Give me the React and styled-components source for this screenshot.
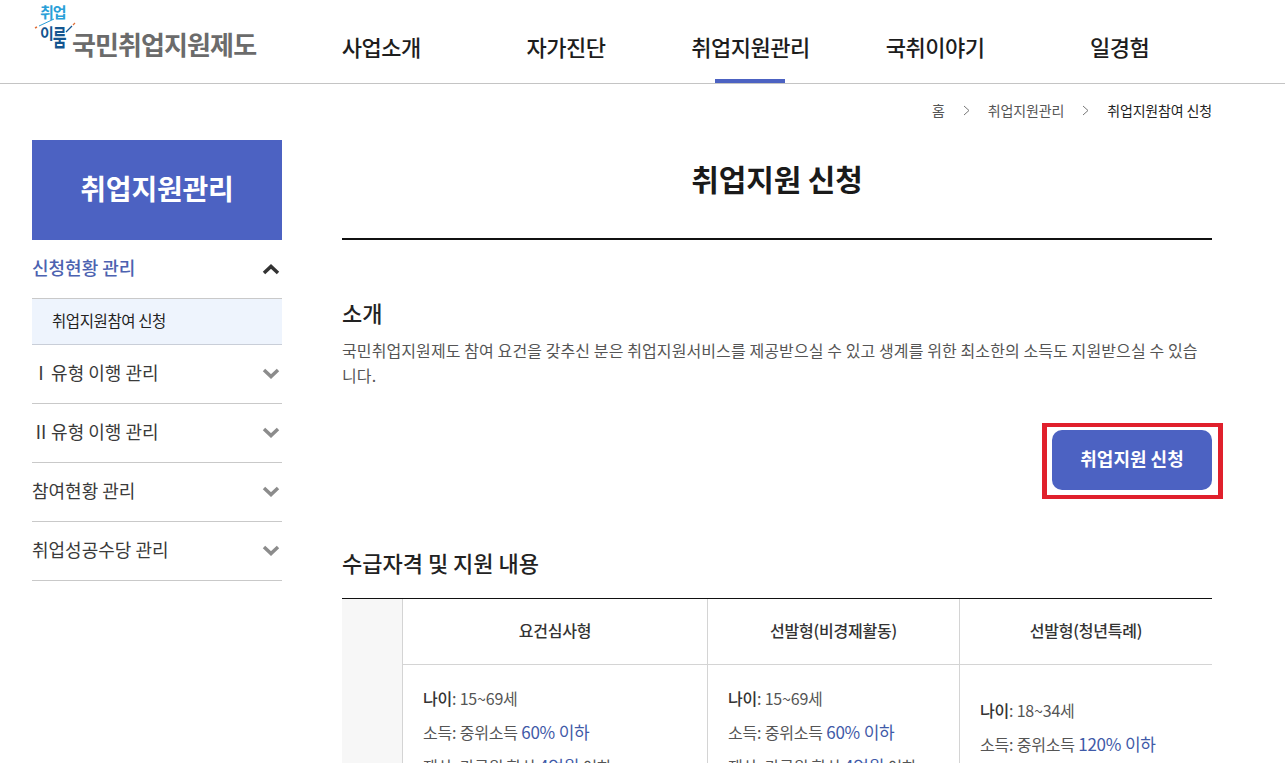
import React from 'react';
import styled, { createGlobalStyle } from 'styled-components';

const GlobalStyle = createGlobalStyle`
  html, body {
    margin: 0;
    padding: 0;
    height: 763px;
    overflow: hidden;
    background: #fff;
    font-family: "Noto Sans CJK KR", "Noto Sans", sans-serif;
    color: #222;
  }
  * { box-sizing: border-box; }
`;

const Header = styled.header`
  display: flex;
  height: 84px;
  border-bottom: 1px solid #c4c4c4;
`;

const Logo = styled.a`
  width: 289px;
  padding-left: 36px;
  display: flex;
  align-items: flex-start;
  flex-shrink: 0;
`;

const LogoMark = styled.div`
  position: relative;
  width: 36px;
  height: 52px;
  padding: 4px 0 0 4px;
  flex-shrink: 0;
  font-size: 15px;
  line-height: 16px;
  font-weight: 700;
  letter-spacing: -1px;
`;

const LogoTop = styled.div`
  color: #2a9fd8;
`;

const LogoBottom = styled.div`
  color: #14558f;
  margin-top: 5px;
`;

const LogoTall = styled.span`
  display: inline-block;
  transform: scaleY(1.5);
  transform-origin: top;
`;

const LogoStroke = styled.svg`
  position: absolute;
  left: 0;
  top: 0;
  overflow: visible;
`;

const LogoName = styled.div`
  margin-top: 28px;
  font-size: 26px;
  line-height: 32px;
  font-weight: 700;
  letter-spacing: -0.9px;
  color: #6b6b6b;
  white-space: nowrap;
`;

const Gnb = styled.nav`
  display: flex;
`;

const GnbItem = styled.a`
  position: relative;
  width: 184.6px;
  height: 83px;
  display: flex;
  justify-content: center;
  padding-top: 30px;
  font-size: 22px;
  line-height: 32px;
  font-weight: 500;
  letter-spacing: -0.5px;
  color: #1d1d1d;
  &::after {
    content: '';
    display: ${(p) => (p.$active ? 'block' : 'none')};
    position: absolute;
    left: 50%;
    bottom: 0;
    width: 70px;
    height: 4px;
    margin-left: -35px;
    background: #4c62c2;
  }
`;

const Body = styled.div`
  display: flex;
  padding: 0 73px 0 32px;
`;

const Side = styled.aside`
  width: 250px;
  margin-top: 56px;
  flex-shrink: 0;
`;

const SideTitle = styled.div`
  height: 100px;
  padding-bottom: 4px;
  display: flex;
  align-items: center;
  justify-content: center;
  background: #4c62c2;
  color: #fff;
  font-size: 28px;
  font-weight: 700;
  letter-spacing: -0.2px;
`;

const SideItem = styled.div`
  height: 59px;
  padding-bottom: 4px;
  display: flex;
  align-items: center;
  justify-content: space-between;
  border-bottom: 1px solid #c9c9c9;
  font-size: 18px;
  font-weight: ${(p) => (p.$open ? 500 : 400)};
  color: ${(p) => (p.$open ? '#4c62b0' : '#3a3a3a')};
`;

const SideSub = styled.div`
  height: 46px;
  padding: 0 0 3px 20px;
  display: flex;
  align-items: center;
  background: #eef4fd;
  border-bottom: 1px solid #c9ced8;
  font-size: 15.5px;
  letter-spacing: -0.4px;
  color: #222;
`;

const Chevron = styled.svg`
  margin: 4px 2px 0 0;
  color: ${(p) => (p.$open ? '#333' : '#8c8c8c')};
`;

const Main = styled.main`
  margin-left: 60px;
  flex: 1;
  min-width: 0;
`;

const Crumbs = styled.div`
  height: 56px;
  padding-bottom: 4px;
  display: flex;
  justify-content: flex-end;
  align-items: center;
  font-size: 14px;
  letter-spacing: -0.15px;
  color: #555;
`;

const CrumbSep = styled.svg`
  margin: 0 18px;
  color: #777;
`;

const CrumbCurrent = styled.span`
  color: #222;
`;

const PageTitle = styled.h1`
  margin: 0;
  height: 100px;
  padding-top: 14px;
  border-bottom: 2px solid #111;
  text-align: center;
  font-size: 30px;
  line-height: 48px;
  font-weight: 700;
  letter-spacing: -0.1px;
  color: #1a1a1a;
`;

const SectionTitle = styled.h2`
  margin: ${(p) => p.$top}px 0 0;
  font-size: 22px;
  line-height: 32px;
  font-weight: 500;
  color: #222;
`;

const Intro = styled.p`
  margin: 10px 0 0;
  font-size: 16px;
  line-height: 25px;
  color: #555;
  letter-spacing: 0.1px;
  word-break: break-all;
`;

const ButtonRow = styled.div`
  display: flex;
  justify-content: flex-end;
  margin-top: 42px;
`;

const ApplyButton = styled.button`
  position: relative;
  width: 160px;
  height: 60px;
  padding: 0 0 5px;
  border: 0;
  border-radius: 10px;
  background: #4c62c2;
  color: #fff;
  font-family: inherit;
  font-size: 18px;
  font-weight: 700;
  &::before {
    content: '';
    position: absolute;
    top: -7px;
    right: -11px;
    bottom: -9px;
    left: -10px;
    border: solid #e0202c;
    border-width: 4px 5px;
  }
`;

const Table = styled.div`
  margin-top: 20px;
  border-top: 1px solid #111;
  display: grid;
  grid-template-columns: 60px 305px 252px 1fr;
  grid-template-rows: 66px auto;
`;

const Corner = styled.div`
  grid-row: span 2;
  height: 300px;
  background: #f7f7f7;
`;

const HeadCell = styled.div`
  padding-bottom: 3px;
  display: flex;
  align-items: center;
  justify-content: center;
  border-left: 1px solid #d4d4d4;
  border-bottom: 1px solid #d4d4d4;
  font-size: 16px;
  font-weight: 500;
  letter-spacing: -0.2px;
  color: #333;
`;

const Cell = styled.div`
  border-left: 1px solid #d4d4d4;
  padding: ${(p) => p.$top}px 0 0 20px;
  font-size: 16px;
  line-height: 34px;
  letter-spacing: -0.2px;
  color: #555;
`;

const Strong = styled.b`
  font-weight: 500;
  color: #333;
`;

const Blue = styled.span`
  color: #3f5aa8;
  font-size: 17px;
`;

function ChevronIcon({ open }) {
  return (
    <Chevron $open={open} width="18" height="12" viewBox="0 0 18 12" fill="none">
      <path
        d={open ? 'M2 10 9 3.5l7 6.5' : 'M2 2 9 8.5 16 2'}
        stroke="currentColor"
        strokeWidth="3.5"
      />
    </Chevron>
  );
}

function Sep() {
  return (
    <CrumbSep width="7" height="11" viewBox="0 0 7 11" fill="none">
      <path d="M1 1l5 4.5L1 10" stroke="currentColor" />
    </CrumbSep>
  );
}

const menus = [
  { label: '사업소개' },
  { label: '자가진단' },
  { label: '취업지원관리', active: true },
  { label: '국취이야기' },
  { label: '일경험' },
];

const sideMenus = ['Ⅰ\u200A유형 이행 관리', 'Ⅱ\u200A유형 이행 관리', '참여현황 관리', '취업성공수당 관리'];

export default function App() {
  return (
    <>
      <GlobalStyle />
      <Header>
        <Logo>
          <LogoMark>
            <LogoTop>취업</LogoTop>
            <LogoBottom>이<LogoTall>룸</LogoTall></LogoBottom>
            <LogoStroke width="36" height="40" viewBox="0 0 36 40" fill="none">
              <path d="M-1 28 1 27" stroke="#e0703a" strokeWidth="1.5" />
              <path d="M3 26 18 19" stroke="#2a9fd8" strokeWidth="1" />
              <path d="M30 32 36 26" stroke="#14558f" strokeWidth="1.2" />
              <path d="M37 25 39 23" stroke="#e0703a" strokeWidth="1.2" />
            </LogoStroke>
          </LogoMark>
          <LogoName>국민취업지원제도</LogoName>
        </Logo>
        <Gnb>
          {menus.map((m) => (
            <GnbItem key={m.label} $active={m.active}>{m.label}</GnbItem>
          ))}
        </Gnb>
      </Header>
      <Body>
        <Side>
          <SideTitle>취업지원관리</SideTitle>
          <SideItem $open>
            신청현황 관리
            <ChevronIcon open />
          </SideItem>
          <SideSub>취업지원참여 신청</SideSub>
          {sideMenus.map((label) => (
            <SideItem key={label}>
              {label}
              <ChevronIcon />
            </SideItem>
          ))}
        </Side>
        <Main>
          <Crumbs>
            홈<Sep />취업지원관리<Sep /><CrumbCurrent>취업지원참여 신청</CrumbCurrent>
          </Crumbs>
          <PageTitle>취업지원 신청</PageTitle>
          <SectionTitle $top={56}>소개</SectionTitle>
          <Intro>
            국민취업지원제도 참여 요건을 갖추신 분은 취업지원서비스를 제공받으실 수 있고 생계를 위한 최소한의 소득도 지원받으실 수 있습니다.
          </Intro>
          <ButtonRow>
            <ApplyButton>취업지원 신청</ApplyButton>
          </ButtonRow>
          <SectionTitle $top={56}>수급자격 및 지원 내용</SectionTitle>
          <Table>
            <Corner />
            <HeadCell>요건심사형</HeadCell>
            <HeadCell>선발형(비경제활동)</HeadCell>
            <HeadCell>선발형(청년특례)</HeadCell>
            <Cell $top={16}>
              <div><Strong>나이</Strong>: 15~69세</div>
              <div>소득: 중위소득 <Blue>60% 이하</Blue></div>
              <div>재산: 가구원 합산 <Blue>4억원</Blue> 이하</div>
            </Cell>
            <Cell $top={16}>
              <div><Strong>나이</Strong>: 15~69세</div>
              <div>소득: 중위소득 <Blue>60% 이하</Blue></div>
              <div>재산: 가구원 합산 <Blue>4억원</Blue> 이하</div>
            </Cell>
            <Cell $top={28}>
              <div><Strong>나이</Strong>: 18~34세</div>
              <div>소득: 중위소득 <Blue>120% 이하</Blue></div>
            </Cell>
          </Table>
        </Main>
      </Body>
    </>
  );
}
